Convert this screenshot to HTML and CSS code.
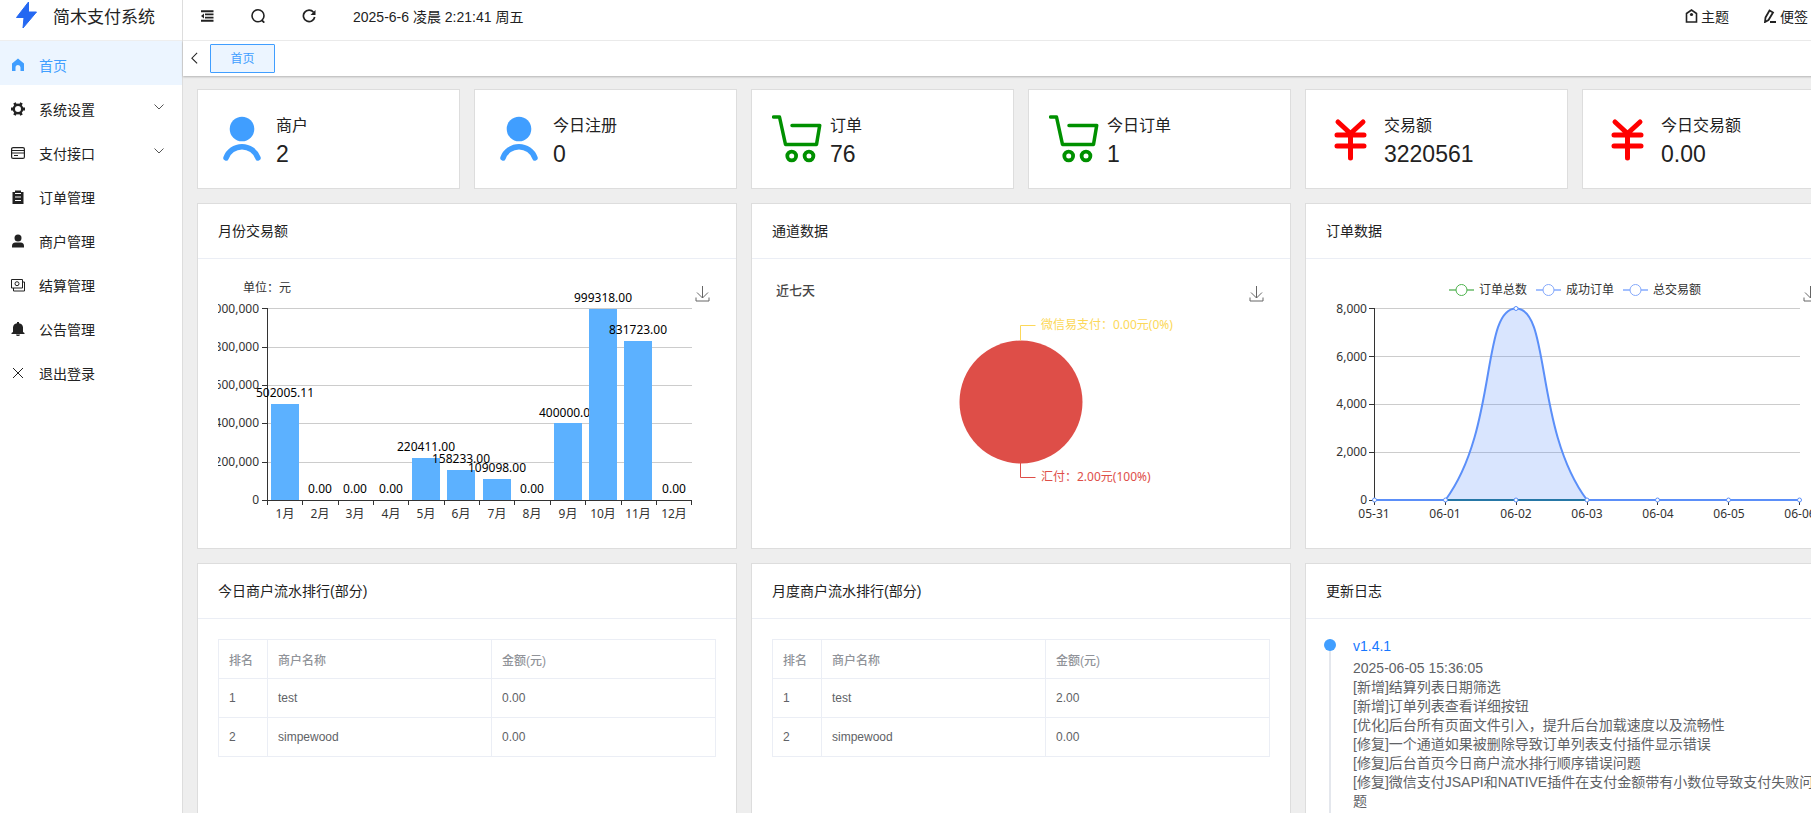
FILE: index.html
```
<!DOCTYPE html>
<html lang="zh-CN">
<head>
<meta charset="utf-8">
<title>简木支付系统</title>
<link rel="stylesheet" href="styles.css">
</head>
<body>

<!-- shared icons -->
<svg class="sprite" aria-hidden="true">
  <symbol id="i-user" viewBox="0 0 50 50">
    <circle cx="24" cy="15" r="12.3" fill="currentColor"/>
    <path d="M8 44a17 17 0 0 1 32 0" fill="none" stroke="currentColor" stroke-width="5.5" stroke-linecap="round"/>
  </symbol>
  <symbol id="i-cart" viewBox="0 0 50 50">
    <path d="M1.500 3h6L13.500 30.500h31L47.700 11.500H20" fill="none" stroke="currentColor" stroke-width="3.500" stroke-linecap="round" stroke-linejoin="round"/>
    <circle cx="19.700" cy="42" r="4.400" fill="none" stroke="currentColor" stroke-width="3.800"/>
    <circle cx="37" cy="42" r="4.400" fill="none" stroke="currentColor" stroke-width="3.800"/>
  </symbol>
  <symbol id="i-yen" viewBox="0 0 50 50">
    <path d="M12 8l12.5 11.5L37 8M11 21h27M11 32h27M24.5 20v24" fill="none" stroke="currentColor" stroke-width="5" stroke-linecap="round" stroke-linejoin="round"/>
  </symbol>
  <symbol id="i-down" viewBox="0 0 12 12">
    <path d="M1.500 3.500L6 8l4.500-4.500" fill="none" stroke="currentColor"/>
  </symbol>
  <symbol id="i-download" viewBox="0 0 14 16">
    <path d="M7 0v12M1.500 6.500L7 12l5.500-5.500M.5 11.500v3.500h13v-3.500" fill="none" stroke="currentColor"/>
  </symbol>
</svg>

<div class="app">
  <aside class="sidebar">
    <div class="brand">
      <svg class="brand-logo" viewBox="0 0 20 26"><path d="M12 0L0 15.500h7.500L6.500 26 20 10h-8z" fill="#2468f2" stroke="#2468f2" stroke-linejoin="round"/></svg>
      <span>简木支付系统</span>
    </div>
    <nav class="menu">
      <a class="menu-item active" href="#">
        <svg class="icon" viewBox="0 0 14 14"><path d="M7 .5l6 5V13H9.500V9.500a2.500 2.500 0 0 0-5 0V13H1V5.500z" fill="currentColor"/></svg>
        <span>首页</span>
      </a>
      <a class="menu-item" href="#">
        <svg class="icon" viewBox="0 0 14 14"><circle cx="7" cy="7" r="4.200" fill="none" stroke="currentColor" stroke-width="2.400"/><path d="M3.500.8l1.300 2.500M10.500.8L9.200 3.300M3.500 13.200l1.300-2.500M10.500 13.200l-1.300-2.500M0 7h2.500M11.500 7H14" stroke="currentColor" stroke-width="2.800"/></svg>
        <span>系统设置</span>
        <svg class="arrow"><use href="#i-down"/></svg>
      </a>
      <a class="menu-item" href="#">
        <svg class="icon" viewBox="0 0 14 14"><rect x=".6" y="1.600" width="12.800" height="10.800" rx="1.500" fill="none" stroke="currentColor" stroke-width="1.200"/><path d="M1 4.500h12M1 7h12M3 9.500h4" stroke="currentColor" stroke-width="1.200"/></svg>
        <span>支付接口</span>
        <svg class="arrow"><use href="#i-down"/></svg>
      </a>
      <a class="menu-item" href="#">
        <svg class="icon" viewBox="0 0 14 14"><path d="M1.500 2H4V.5h6V2h2.500v12h-11z" fill="currentColor"/><path d="M4 3.500h6M4 7h6M4 10.500h6" stroke="#fff" stroke-width="1.200"/></svg>
        <span>订单管理</span>
      </a>
      <a class="menu-item" href="#">
        <svg class="icon" viewBox="0 0 14 14"><circle cx="7" cy="4" r="3.500" fill="currentColor"/><path d="M1 13.500V12a3.500 3.500 0 0 1 3.500-3.500h5A3.500 3.500 0 0 1 13 12v1.500z" fill="currentColor"/></svg>
        <span>商户管理</span>
      </a>
      <a class="menu-item" href="#">
        <svg class="icon" viewBox="0 0 14 14"><path d="M.5 1.500h11v8.500H.5zM11.500 4h2v9h-11v-3" fill="none" stroke="currentColor"/><circle cx="6" cy="5.700" r="2" fill="none" stroke="currentColor"/></svg>
        <span>结算管理</span>
      </a>
      <a class="menu-item" href="#">
        <svg class="icon" viewBox="0 0 14 14"><path d="M6 0h2v1.200a4.500 4.500 0 0 1 4 4V10l1.500 1v1H.5v-1L2 10V5.200a4.500 4.500 0 0 1 4-4zM5 12.500h4a2 1.500 0 0 1-4 0z" fill="currentColor"/></svg>
        <span>公告管理</span>
      </a>
      <a class="menu-item" href="#">
        <svg class="icon" viewBox="0 0 14 14"><path d="M2 2l10 10M12 2L2 12" stroke="currentColor"/></svg>
        <span>退出登录</span>
      </a>
    </nav>
  </aside>

  <div class="main">
    <header class="topbar">
      <button class="tool" type="button" aria-label="收起菜单"><svg class="icon" viewBox="0 0 14 14"><path d="M1 2.200h12.500M5 5.400h8.500M5 8.600h8.500M1 11.800h12.500" stroke="currentColor" stroke-width="1.900"/><path d="M1 7l3-2.500v5z" fill="currentColor"/></svg></button>
      <button class="tool" type="button" aria-label="搜索"><svg class="icon" viewBox="0 0 14 14"><circle cx="7" cy="6.800" r="6" fill="none" stroke="currentColor" stroke-width="1.600"/><path d="M10.500 11l2.800 2.600" stroke="currentColor" stroke-width="1.800"/></svg></button>
      <button class="tool" type="button" aria-label="刷新"><svg class="icon" viewBox="0 0 14 14"><path d="M11.500 3.200A5.700 5.700 0 1 0 12.700 8" fill="none" stroke="currentColor" stroke-width="1.700"/><path d="M13.500 1v5h-5z" fill="currentColor"/></svg></button>
      <span class="clock">2025-6-6 凌晨 2:21:41 周五</span>
      <div class="topbar-right">
        <a class="top-link" href="#"><svg class="icon" viewBox="0 0 14 14"><path d="M2.500 13V4.500L7.500 1l5 3.500V13z" fill="none" stroke="currentColor" stroke-width="1.600"/><circle cx="7.500" cy="5.500" r="1.600" fill="currentColor"/></svg>主题</a>
        <a class="top-link" href="#"><svg class="icon" viewBox="0 0 14 14"><path d="M2.500 8.500L6.500 1.500l3.500 2-4.500 7.500L2 13zM7 13h6" fill="none" stroke="currentColor" stroke-width="1.800"/></svg>便签</a>
      </div>
    </header>

    <div class="tabs">
      <button class="tabs-prev" type="button" aria-label="上一个"><svg viewBox="0 0 8 14"><path d="M7 1L1 7l6 6" fill="none" stroke="currentColor" stroke-width="1.200"/></svg></button>
      <button class="tab" type="button">首页</button>
    </div>

    <main class="content">
      <section class="stats">
        <div class="card stat">
          <svg class="stat-icon blue"><use href="#i-user"/></svg>
          <div><div class="stat-name">商户</div><div class="stat-value">2</div></div>
        </div>
        <div class="card stat">
          <svg class="stat-icon blue"><use href="#i-user"/></svg>
          <div><div class="stat-name">今日注册</div><div class="stat-value">0</div></div>
        </div>
        <div class="card stat">
          <svg class="stat-icon green"><use href="#i-cart"/></svg>
          <div><div class="stat-name">订单</div><div class="stat-value">76</div></div>
        </div>
        <div class="card stat">
          <svg class="stat-icon green"><use href="#i-cart"/></svg>
          <div><div class="stat-name">今日订单</div><div class="stat-value">1</div></div>
        </div>
        <div class="card stat">
          <svg class="stat-icon red"><use href="#i-yen"/></svg>
          <div><div class="stat-name">交易额</div><div class="stat-value">3220561</div></div>
        </div>
        <div class="card stat">
          <svg class="stat-icon red"><use href="#i-yen"/></svg>
          <div><div class="stat-name">今日交易额</div><div class="stat-value">0.00</div></div>
        </div>
      </section>

      <section class="panels">
        <div class="card">
          <h2 class="card-header">月份交易额</h2>
          <div class="card-body">
            <svg class="chart" viewBox="0 0 498 249">
              <text x="49" y="13" class="mid">单位：元</text>
              <path class="grid" d="M49 29.500h425M49 68.500h425M49 106.500h425M49 144.500h425M49 183.500h425"/>
              <path class="axis" d="M49.500 29v192M44 29.500h5M44 68.500h5M44 106.500h5M44 144.500h5M44 183.500h5M44 221.500h430M49.500 221v5M84.500 221v5M120.500 221v5M155.500 221v5M190.500 221v5M226.500 221v5M261.500 221v5M296.500 221v5M332.500 221v5M367.500 221v5M403.500 221v5M438.500 221v5M473.500 221v5"/>
              <g class="end">
                <text x="41" y="34">1,000,000</text>
                <text x="41" y="72">800,000</text>
                <text x="41" y="110">600,000</text>
                <text x="41" y="148">400,000</text>
                <text x="41" y="187">200,000</text>
                <text x="41" y="225">0</text>
              </g>
              <g class="mid">
                <text x="67" y="239">1月</text>
                <text x="102" y="239">2月</text>
                <text x="137" y="239">3月</text>
                <text x="173" y="239">4月</text>
                <text x="208" y="239">5月</text>
                <text x="243" y="239">6月</text>
                <text x="279" y="239">7月</text>
                <text x="314" y="239">8月</text>
                <text x="350" y="239">9月</text>
                <text x="385" y="239">10月</text>
                <text x="420" y="239">11月</text>
                <text x="456" y="239">12月</text>
              </g>
              <!-- each label follows its own bar, so a later bar can cover it -->
              <g class="bars mid">
                <rect x="53" y="125" width="28" height="96"/><text x="67" y="118">502005.11</text>
                <text x="102" y="214">0.00</text>
                <text x="137" y="214">0.00</text>
                <text x="173" y="214">0.00</text>
                <rect x="194" y="179" width="28" height="42"/><text x="208" y="172">220411.00</text>
                <rect x="229" y="191" width="28" height="30"/><text x="243" y="184">158233.00</text>
                <rect x="265" y="200" width="28" height="21"/><text x="279" y="193">109098.00</text>
                <text x="314" y="214">0.00</text>
                <rect x="336" y="144" width="28" height="77"/><text x="350" y="138">400000.00</text>
                <rect x="371" y="30" width="28" height="191"/><text x="385" y="23">999318.00</text>
                <rect x="406" y="62" width="28" height="159"/><text x="420" y="55">831723.00</text>
                <text x="456" y="214">0.00</text>
              </g>
              <use class="download" href="#i-download" x="477" y="7" width="15" height="16"/>
            </svg>
          </div>
        </div>

        <div class="card">
          <h2 class="card-header">通道数据</h2>
          <div class="card-body">
            <svg class="chart" viewBox="0 0 498 249">
              <text x="4" y="16" class="chart-title">近七天</text>
              <circle cx="249" cy="123" r="61.500" fill="#de4e48"/>
              <path d="M248.500 61.500v-15h15" fill="none" stroke="#fcd859"/>
              <path d="M248.500 184v14.500h15" fill="none" stroke="#de4e48"/>
              <text x="269" y="50" class="yellow">微信易支付：0.00元(0%)</text>
              <text x="269" y="202" class="pink">汇付：2.00元(100%)</text>
              <use class="download" href="#i-download" x="477" y="7" width="15" height="16"/>
            </svg>
          </div>
        </div>

        <div class="card">
          <h2 class="card-header">订单数据</h2>
          <div class="card-body">
            <svg class="chart" viewBox="0 0 498 249">
              <g class="legend">
                <path d="M123 11h25" stroke="#8fcc8f"/><circle cx="135.500" cy="11" r="5.500" stroke="#4db34d"/>
                <path d="M210 11h25" stroke="#a3c0ff"/><circle cx="222.500" cy="11" r="5.500" stroke="#85a9fb"/>
                <path d="M297 11h25" stroke="#a3c0ff"/><circle cx="309.500" cy="11" r="5.500" stroke="#85a9fb"/>
              </g>
              <text x="153" y="15">订单总数</text>
              <text x="240" y="15">成功订单</text>
              <text x="327" y="15">总交易额</text>
              <path class="grid" d="M49 29.500h425M49 77.500h425M49 125.500h425M49 173.500h425"/>
              <path class="axis" d="M48.500 29v192M43 29.500h5M43 77.500h5M43 125.500h5M43 173.500h5M43 221.500h430M48.500 221v5M119.500 221v5M190.500 221v5M261.500 221v5M331.500 221v5M402.500 221v5M473.500 221v5"/>
              <g class="end">
                <text x="41" y="34">8,000</text>
                <text x="41" y="82">6,000</text>
                <text x="41" y="129">4,000</text>
                <text x="41" y="177">2,000</text>
                <text x="41" y="225">0</text>
              </g>
              <g class="mid">
                <text x="48" y="239">05-31</text>
                <text x="119" y="239">06-01</text>
                <text x="190" y="239">06-02</text>
                <text x="261" y="239">06-03</text>
                <text x="332" y="239">06-04</text>
                <text x="403" y="239">06-05</text>
                <text x="474" y="239">06-06</text>
              </g>
              <path d="M119.500 221C172 150 155 29.500 190 29.500S208 150 261 221z" fill="#5b8ff9" fill-opacity=".23"/>
              <path class="line" d="M48.500 221h71C172 150 155 29.500 190 29.500S208 150 261 221h212.500"/>
              <path d="M119.500 221h141.500" stroke="#2677a6" stroke-width="2"/>
              <g class="dots">
                <circle cx="48.500" cy="221" r="2"/>
                <circle cx="119.500" cy="221" r="2"/>
                <circle cx="190" cy="29.500" r="2"/>
                <circle cx="190" cy="221" r="2"/>
                <circle cx="261" cy="221" r="2"/>
                <circle cx="331.500" cy="221" r="2"/>
                <circle cx="402.500" cy="221" r="2"/>
                <circle cx="473.500" cy="221" r="2"/>
              </g>
              <use class="download" href="#i-download" x="477" y="7" width="15" height="16"/>
            </svg>
          </div>
        </div>

        <div class="card">
          <h2 class="card-header">今日商户流水排行(部分)</h2>
          <div class="card-body">
            <table class="rank">
              <thead><tr><th class="rank-no">排名</th><th>商户名称</th><th>金额(元)</th></tr></thead>
              <tbody>
                <tr><td>1</td><td>test</td><td>0.00</td></tr>
                <tr><td>2</td><td>simpewood</td><td>0.00</td></tr>
              </tbody>
            </table>
          </div>
        </div>

        <div class="card">
          <h2 class="card-header">月度商户流水排行(部分)</h2>
          <div class="card-body">
            <table class="rank">
              <thead><tr><th class="rank-no">排名</th><th>商户名称</th><th>金额(元)</th></tr></thead>
              <tbody>
                <tr><td>1</td><td>test</td><td>2.00</td></tr>
                <tr><td>2</td><td>simpewood</td><td>0.00</td></tr>
              </tbody>
            </table>
          </div>
        </div>

        <div class="card">
          <h2 class="card-header">更新日志</h2>
          <div class="card-body">
            <div class="log">
              <div class="log-version">v1.4.1</div>
              <div class="log-text">
                2025-06-05 15:36:05<br>
                [新增]结算列表日期筛选<br>
                [新增]订单列表查看详细按钮<br>
                [优化]后台所有页面文件引入，提升后台加载速度以及流畅性<br>
                [修复]一个通道如果被删除导致订单列表支付插件显示错误<br>
                [修复]后台首页今日商户流水排行顺序错误问题<br>
                [修复]微信支付JSAPI和NATIVE插件在支付金额带有小数位导致支付失败问题
              </div>
            </div>
          </div>
        </div>
      </section>
    </main>
  </div>
</div>

</body>
</html>
```

FILE: styles.css
```
* {
  box-sizing: border-box;
}

body {
  margin: 0;
  height: 100vh;
  overflow: hidden;
  font-family: "Liberation Sans", "Noto Sans CJK SC", sans-serif;
  font-size: 14px;
  color: #222;
  background: #eee;
}

a {
  color: inherit;
  text-decoration: none;
}

button {
  font: inherit;
  color: inherit;
  padding: 0;
  border: 0;
  background: none;
  cursor: pointer;
}

.sprite {
  display: none;
}

.icon {
  width: 14px;
  height: 14px;
  flex: none;
}

/* a bit wider than the window, the right edge runs out of view */
.app {
  display: flex;
  width: calc(100% + 48px);
  min-height: 100vh;
}

/* sidebar */
.sidebar {
  flex: none;
  width: 183px;
  background: #fff;
  border-right: 1px solid #ddd;
}

.brand {
  display: flex;
  align-items: center;
  gap: 16px;
  height: 41px;
  padding: 0 16px 10px;
  border-bottom: 1px solid #eee;
  font-size: 17px;
}

.brand-logo {
  width: 21px;
  height: 26px;
  overflow: visible;
}

.menu-item {
  display: flex;
  align-items: center;
  height: 44px;
  padding: 3px 17px 0 11px;
  gap: 14px;
}

.menu-item.active {
  color: #409eff;
  background: #ecf5ff;
}

.arrow {
  width: 12px;
  height: 12px;
  margin: 0 0 4px auto;
  color: #555;
}

/* top */
.main {
  flex: 1;
  min-width: 0;
}

.topbar {
  display: flex;
  align-items: center;
  height: 41px;
  padding: 0 51px 8px 17px;
  background: #fff;
  border-bottom: 1px solid #eee;
}

.tool {
  display: flex;
  width: 14px;
  margin-right: 37px;
}

.clock {
  white-space: nowrap;
}

.topbar-right {
  display: flex;
  gap: 34px;
  margin-left: auto;
}

.top-link {
  display: flex;
  align-items: center;
  gap: 3px;
}

.tabs {
  display: flex;
  align-items: center;
  height: 35px;
  padding-left: 8px;
  background: #fff;
  box-shadow: 0 1px 2px rgba(0, 0, 0, 0.25);
}

.tabs-prev {
  display: flex;
  width: 7px;
  margin-right: 12px;
}

.tab {
  width: 65px;
  height: 29px;
  padding-bottom: 2px;
  font-size: 12px;
  color: #409eff;
  background: #ecf5ff;
  border: 1px solid #409eff;
  border-radius: 1px;
}

/* cards */
.content {
  padding: 13px 14px;
}

.stats {
  display: grid;
  grid-template-columns: repeat(6, 1fr);
  gap: 14px;
  margin-bottom: 14px;
}

.panels {
  display: grid;
  grid-template-columns: repeat(3, 1fr);
  gap: 14px;
}

.card {
  background: #fff;
  border: 1px solid #ddd;
}

.stat {
  display: flex;
  align-items: center;
  gap: 8px;
  height: 100px;
  padding: 0 20px;
}

.stat-icon {
  width: 50px;
  height: 50px;
}

.blue {
  color: #409eff;
}

.green {
  color: #009000;
}

.red {
  color: #f00;
}

.stat-name {
  font-size: 16px;
  line-height: 30px;
}

.stat-value {
  font-size: 23px;
  line-height: 26px;
}

.card-header {
  margin: 0;
  padding: 18px 20px;
  font-size: 14px;
  font-weight: normal;
  line-height: 18px;
  border-bottom: 1px solid #ebeef5;
}

.card-body {
  padding: 20px;
}

/* charts */
.chart {
  display: block;
  width: 100%;
  font-family: "Noto Sans", "Noto Sans CJK SC", sans-serif;
  font-size: 12px;
  fill: #333;
}

.mid {
  text-anchor: middle;
}

.end {
  text-anchor: end;
}

.grid {
  stroke: #ccc;
}

.axis {
  stroke: #333;
}

.bars rect {
  fill: #5cb1ff;
}

.bars text {
  fill: #000;
}

.download {
  color: #666;
}

.chart-title {
  font-size: 13px;
  font-weight: 500;
  fill: #464646;
}

.yellow {
  fill: #fcd859;
}

.pink {
  fill: #de4e48;
}

.legend path {
  stroke-width: 2;
}

.legend circle {
  fill: #fff;
}

.line {
  fill: none;
  stroke: #5b8ff9;
  stroke-width: 2;
}

.dots circle {
  fill: #fff;
  stroke: #5b8ff9;
}

/* ranking tables */
.rank {
  width: 100%;
  table-layout: fixed;
  border-collapse: collapse;
  font-size: 12px;
  color: #606266;
}

.rank th,
.rank td {
  height: 39px;
  padding: 0 10px;
  text-align: left;
  border: 1px solid #ebeef5;
}

.rank th {
  font-weight: 500;
  color: #909399;
}

.rank-no {
  width: 49px;
}

/* change log */
.log {
  position: relative;
  padding: 0 8px 60px 27px;
}

.log::before {
  content: "";
  position: absolute;
  top: 0;
  bottom: 0;
  left: 3px;
  width: 2px;
  background: #e4e7ed;
}

.log::after {
  content: "";
  position: absolute;
  top: 0;
  left: -2px;
  width: 12px;
  height: 12px;
  border-radius: 50%;
  background: #409eff;
}

.log-version {
  line-height: 14px;
  margin-bottom: 6px;
  color: #1677ff;
}

.log-text {
  line-height: 19px;
  color: #606266;
}
```
